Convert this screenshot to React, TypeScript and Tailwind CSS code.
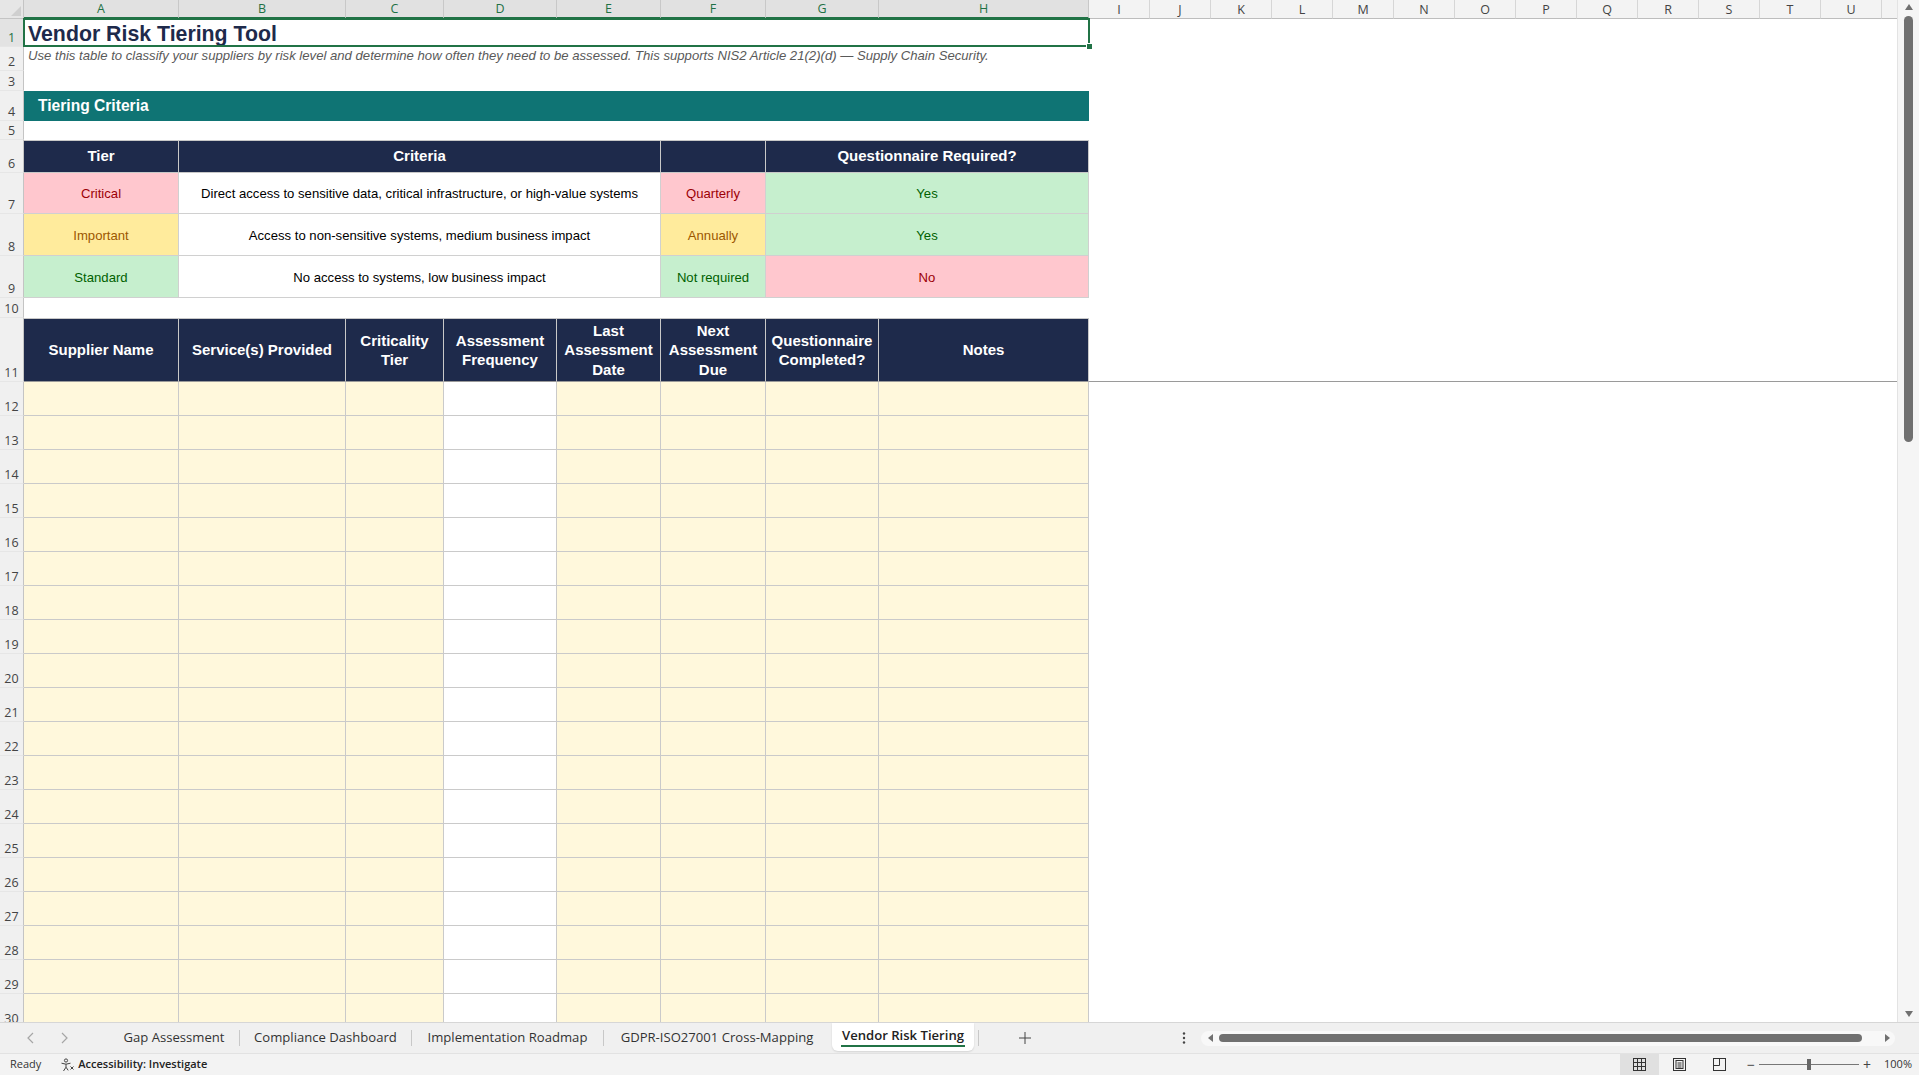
import React from "react";

const CELL = "font-['Liberation_Sans',Arial,sans-serif]";
const UI = "font-['Open_Sans','Noto_Sans',sans-serif]";

const COLS = [
  { l: "A", w: "w-[155px]" },
  { l: "B", w: "w-[167px]" },
  { l: "C", w: "w-[98px]" },
  { l: "D", w: "w-[113px]" },
  { l: "E", w: "w-[104px]" },
  { l: "F", w: "w-[105px]" },
  { l: "G", w: "w-[113px]" },
  { l: "H", w: "w-[210px]" },
];
const EXTRA = ["I", "J", "K", "L", "M", "N", "O", "P", "Q", "R", "S", "T", "U"];

function RowHead({ n, active = false }: { n: number; active?: boolean }) {
  return (
    <div
      className={`flex w-[24px] shrink-0 items-end justify-center border-r border-b border-r-[#c4c4c4] border-b-[#e6e6e6] pb-[1px] text-[12.5px] leading-[14px] ${UI} ${
        active ? "bg-[#e3e3e3] text-[#1e7145]" : "bg-[#f0f0f0] text-[#444]"
      }`}
    >
      {n}
    </div>
  );
}

function ColHeader() {
  return (
    <div className={`flex h-[19px] shrink-0 text-[12.5px] leading-none ${UI}`}>
      <div className="flex w-[24px] shrink-0 items-end justify-end border-r border-b border-[#c4c4c4] bg-[#e6e6e6] p-[2px]">
        <svg width="10" height="10" viewBox="0 0 10 10">
          <path d="M10 0v10H0z" fill="#cfcfcf" />
        </svg>
      </div>
      {COLS.map((c) => (
        <div
          key={c.l}
          className={`${c.w} flex shrink-0 items-center justify-center border-r border-b-2 border-r-[#c8c8c8] border-b-[#217346] bg-[#e1e1e1] pt-[2px] text-[#1e7145]`}
        >
          {c.l}
        </div>
      ))}
      {EXTRA.map((l) => (
        <div
          key={l}
          className="flex w-[61px] shrink-0 items-center justify-center border-r border-b border-r-[#d6d6d6] border-b-[#bdbdbd] bg-[#f3f3f3] pt-[2px] text-[#444]"
        >
          {l}
        </div>
      ))}
      <div className="flex-1 border-b border-[#bdbdbd] bg-[#f3f3f3]" />
    </div>
  );
}

function Blank({ n, h }: { n: number; h: string }) {
  return (
    <div className={`flex ${h} shrink-0`}>
      <RowHead n={n} />
      <div className="flex-1" />
    </div>
  );
}

const TIERS = [
  {
    n: 7,
    h: "h-[41px]",
    tier: "Critical",
    tierCls: "bg-[#ffc7ce] text-[#9c0006]",
    crit: "Direct access to sensitive data, critical infrastructure, or high-value systems",
    freq: "Quarterly",
    freqCls: "bg-[#ffc7ce] text-[#9c0006]",
    q: "Yes",
    qCls: "bg-[#c6efce] text-[#006100]",
  },
  {
    n: 8,
    h: "h-[42px]",
    tier: "Important",
    tierCls: "bg-[#ffeb9c] text-[#9c5700]",
    crit: "Access to non-sensitive systems, medium business impact",
    freq: "Annually",
    freqCls: "bg-[#ffeb9c] text-[#9c5700]",
    q: "Yes",
    qCls: "bg-[#c6efce] text-[#006100]",
  },
  {
    n: 9,
    h: "h-[42px]",
    tier: "Standard",
    tierCls: "bg-[#c6efce] text-[#006100]",
    crit: "No access to systems, low business impact",
    freq: "Not required",
    freqCls: "bg-[#c6efce] text-[#006100]",
    q: "No",
    qCls: "bg-[#ffc7ce] text-[#9c0006]",
  },
];

const MAIN_HEAD = [
  { w: "w-[155px]", t: ["Supplier Name"] },
  { w: "w-[167px]", t: ["Service(s) Provided"] },
  { w: "w-[98px]", t: ["Criticality", "Tier"] },
  { w: "w-[113px]", t: ["Assessment", "Frequency"] },
  { w: "w-[104px]", t: ["Last", "Assessment", "Date"] },
  { w: "w-[105px]", t: ["Next", "Assessment", "Due"] },
  { w: "w-[113px]", t: ["Questionnaire", "Completed?"] },
  { w: "w-[210px]", t: ["Notes"] },
];

const DATA_ROWS = Array.from({ length: 19 }, (_, i) => i + 12);

function Sheet() {
  const box = "shrink-0 flex items-center justify-center border-r border-b";
  return (
    <div className={`flex min-w-0 flex-1 flex-col overflow-hidden ${CELL}`}>
      <ColHeader />

      {/* row 1 title */}
      <div className="flex h-[28px] shrink-0">
        <RowHead n={1} active />
        <div className="relative flex w-[1065px] shrink-0 items-end pb-[1px] pl-[4px] text-[21.3px] leading-[24px] font-bold text-[#1e2a4b]">
          Vendor Risk Tiering Tool
          <div className="pointer-events-none absolute -top-[1px] -left-[1px] -right-[1px] bottom-0 border-2 border-[#217346]" />
          <div className="absolute -right-[4px] -bottom-[3px] h-[7px] w-[7px] border border-white bg-[#217346]" />
        </div>
      </div>

      {/* row 2 subtitle */}
      <div className="flex h-[24px] shrink-0">
        <RowHead n={2} />
        <div className="flex flex-1 items-start whitespace-nowrap pt-[1px] pl-[4px] text-[13.13px] leading-[15px] italic text-[#595959]">
          Use this table to classify your suppliers by risk level and determine how often they need to be assessed. This supports NIS2 Article 21(2)(d) — Supply Chain Security.
        </div>
      </div>

      <Blank n={3} h="h-[20px]" />

      {/* row 4 section bar */}
      <div className="flex h-[30px] shrink-0">
        <RowHead n={4} />
        <div className="flex w-[1065px] shrink-0 items-center bg-[#0f7474] pl-[14px] text-[15.6px] font-bold text-white">
          Tiering Criteria
        </div>
      </div>

      <Blank n={5} h="h-[19px]" />

      {/* row 6 criteria header */}
      <div className="flex h-[33px] shrink-0">
        <RowHead n={6} />
        <div className="flex border-t border-[#c8c8c8] bg-[#1e2a4b] text-[15px] font-bold text-white">
          <div className={`${box} w-[155px] border-[#c8c8c8]`}>Tier</div>
          <div className={`${box} w-[482px] border-[#c8c8c8]`}>Criteria</div>
          <div className={`${box} w-[105px] border-[#c8c8c8]`} />
          <div className={`${box} w-[323px] border-[#c8c8c8]`}>Questionnaire Required?</div>
        </div>
      </div>

      {TIERS.map((r) => (
        <div key={r.n} className={`flex ${r.h} shrink-0`}>
          <RowHead n={r.n} />
          <div className="flex text-[13.13px]">
            <div className={`${box} w-[155px] border-[#d0d0d0] pt-[2px] ${r.tierCls}`}>{r.tier}</div>
            <div className={`${box} w-[482px] border-[#d0d0d0] bg-white pt-[2px] text-black`}>{r.crit}</div>
            <div className={`${box} w-[105px] border-[#d0d0d0] pt-[2px] ${r.freqCls}`}>{r.freq}</div>
            <div className={`${box} w-[323px] border-[#d0d0d0] pt-[2px] ${r.qCls}`}>{r.q}</div>
          </div>
        </div>
      ))}

      <Blank n={10} h="h-[20px]" />

      {/* row 11 main header */}
      <div className="flex h-[64px] shrink-0">
        <RowHead n={11} />
        <div className="flex border-t border-[#c8c8c8] bg-[#1e2a4b] text-[15px] leading-[19.5px] font-bold text-white">
          {MAIN_HEAD.map((c, i) => (
            <div key={i} className={`${box} ${c.w} flex-col border-r-[#c8c8c8] border-b-[#9a9a9a] text-center`}>
              {c.t.map((line) => (
                <span key={line}>{line}</span>
              ))}
            </div>
          ))}
        </div>
        <div className="flex-1 border-b border-[#9a9a9a]" />
      </div>

      {DATA_ROWS.map((n) => (
        <div key={n} className="flex h-[34px] shrink-0">
          <RowHead n={n} />
          {COLS.map((c) => (
            <div
              key={c.l}
              className={`${c.w} shrink-0 border-r border-b border-[#cacaca] ${c.l === "D" ? "bg-white" : "bg-[#fff8dc]"}`}
            />
          ))}
          <div className="flex-1" />
        </div>
      ))}
    </div>
  );
}

function VScroll() {
  return (
    <div className="relative flex w-[22px] shrink-0 flex-col items-center border-l border-[#e3e3e3] bg-[#f5f5f5]">
      <div className="mt-[4px] h-0 w-0 border-x-[4px] border-b-[6px] border-x-transparent border-b-[#707070]" />
      <div className="mt-[6px] h-[426px] w-[9px] rounded-full bg-[#707070]" />
      <div className="flex-1" />
      <div className="mb-[5px] h-0 w-0 border-x-[4px] border-t-[6px] border-x-transparent border-t-[#707070]" />
    </div>
  );
}

function TabBar() {
  const sep = <span className="h-[16px] w-px shrink-0 bg-[#c8c8c8]" />;
  const tab = "flex h-full shrink-0 items-center justify-center text-[13.1px] text-[#333]";
  return (
    <div className={`flex h-[31px] shrink-0 items-center border-t border-[#d6d6d6] bg-[#f0f0f0] ${UI}`}>
      <div className="flex w-[109px] shrink-0 items-center text-[#a6a6a6]">
        <svg className="ml-[27px]" width="8" height="12" viewBox="0 0 8 12">
          <path d="M6 1 1 6l5 5" fill="none" stroke="currentColor" strokeWidth="1.2" />
        </svg>
        <svg className="ml-[25px]" width="8" height="12" viewBox="0 0 8 12">
          <path d="m2 1 5 5-5 5" fill="none" stroke="currentColor" strokeWidth="1.2" />
        </svg>
      </div>
      <div className={`${tab} w-[130px]`}>Gap Assessment</div>
      {sep}
      <div className={`${tab} w-[171px]`}>Compliance Dashboard</div>
      {sep}
      <div className={`${tab} w-[191px]`}>Implementation Roadmap</div>
      {sep}
      <div className={`${tab} w-[226px]`}>GDPR-ISO27001 Cross-Mapping</div>
      <div className="ml-[2px] flex h-[28px] w-[142px] shrink-0 flex-col items-center justify-center self-start rounded-b-[6px] bg-white shadow-[0_1px_2px_rgba(0,0,0,0.12)]">
        <span className="text-[13.1px] leading-[16px] font-semibold text-[#222]">Vendor Risk Tiering</span>
        <span className="mt-[2px] h-[2px] w-[124px] bg-[#217346]" />
      </div>
      <span className="ml-[4px] h-[16px] w-px shrink-0 bg-[#c8c8c8]" />
      <div className="flex w-[92px] shrink-0 items-center justify-center text-[#444]">
        <svg width="12" height="12" viewBox="0 0 12 12">
          <path d="M6 0v12M0 6h12" stroke="currentColor" strokeWidth="1" />
        </svg>
      </div>
      <div className="flex w-[130px] shrink-0 justify-end pr-[15px] text-[#444]">
        <svg width="4" height="14" viewBox="0 0 4 14">
          <circle cx="2" cy="2.5" r="1.2" fill="currentColor" />
          <circle cx="2" cy="7" r="1.2" fill="currentColor" />
          <circle cx="2" cy="11.5" r="1.2" fill="currentColor" />
        </svg>
      </div>
      <div className="flex h-[15px] w-[694px] shrink-0 items-center rounded-full bg-[#f8f8f8]">
        <div className="ml-[7px] h-0 w-0 border-y-[4px] border-r-[5px] border-y-transparent border-r-[#707070]" />
        <div className="ml-[6px] h-[8px] w-[643px] rounded-full bg-[#707070]" />
        <div className="ml-[23px] h-0 w-0 border-y-[4px] border-l-[5px] border-y-transparent border-l-[#707070]" />
      </div>
    </div>
  );
}

function StatusBar() {
  return (
    <div className={`flex h-[22px] shrink-0 items-center border-t border-[#e2e2e2] bg-[#f3f3f3] text-[11px] text-[#333] ${UI}`}>
      <span className="ml-[10px]">Ready</span>
      <svg className="ml-[19px]" width="14" height="14" viewBox="0 0 14 14" fill="none" stroke="#444" strokeWidth="1">
        <circle cx="6" cy="2.5" r="1.6" />
        <path d="M1.5 5.2 6 6.2l4.5-1M6 6.2v3M6 9.2 3.5 13M6 9.2l2.2 3.2" />
        <path d="M10.5 8.5l3 3M13.5 8.5l-3 3" />
      </svg>
      <span className="ml-[4px] font-semibold text-[#222]">Accessibility: Investigate</span>
      <div className="flex-1" />
      <div className="flex h-full w-[39px] items-center justify-center bg-[#e0e0e0]">
        <svg width="13" height="13" viewBox="0 0 13 13" fill="none" stroke="#333" strokeWidth="1">
          <rect x="0.5" y="0.5" width="12" height="12" />
          <path d="M4.5 0.5v12M8.5 0.5v12M0.5 4.5h12M0.5 8.5h12" />
        </svg>
      </div>
      <div className="flex h-full w-[41px] items-center justify-center">
        <svg width="13" height="13" viewBox="0 0 13 13" fill="none" stroke="#333" strokeWidth="1">
          <rect x="0.5" y="0.5" width="12" height="12" />
          <rect x="3" y="2.5" width="7" height="8" />
          <path d="M4.5 5h4M4.5 7h4M4.5 9h4" />
        </svg>
      </div>
      <div className="flex h-full w-[39px] items-center justify-center">
        <svg width="13" height="13" viewBox="0 0 13 13" fill="none" stroke="#333" strokeWidth="1">
          <rect x="0.5" y="0.5" width="12" height="12" />
          <path d="M0.5 7.5h6v-7" />
        </svg>
      </div>
      <span className="ml-[8px] text-[14px] leading-none text-[#444]">−</span>
      <div className="relative ml-[4px] flex h-[12px] w-[100px] items-center">
        <div className="h-px w-full bg-[#777]" />
        <div className="absolute left-[48px] h-[11px] w-[4px] bg-[#666]" />
      </div>
      <span className="ml-[4px] text-[14px] leading-none text-[#444]">+</span>
      <span className="mr-[7px] ml-[13px] text-[11px]">100%</span>
    </div>
  );
}

export default function App() {
  return (
    <div className="flex h-[1075px] w-[1919px] flex-col overflow-hidden bg-white">
      <div className="flex h-[1022px] shrink-0 overflow-hidden">
        <Sheet />
        <VScroll />
      </div>
      <TabBar />
      <StatusBar />
    </div>
  );
}
